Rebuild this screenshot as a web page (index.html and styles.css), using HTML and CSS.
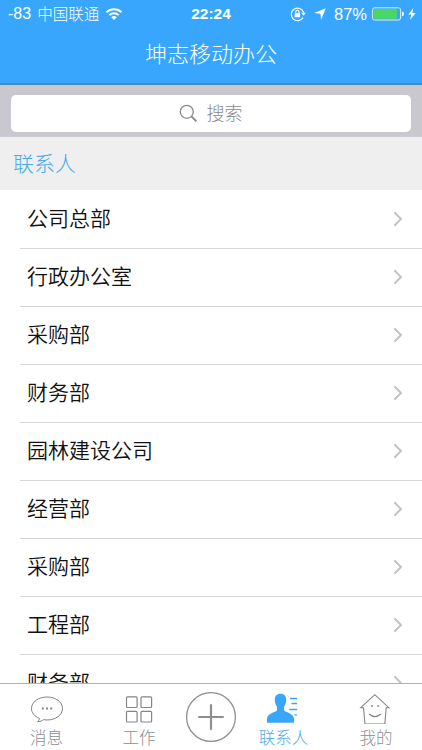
FILE: index.html
```
<!DOCTYPE html>
<html lang="zh-CN">
<head>
    <meta charset="UTF-8">
    <meta name="viewport" content="width=device-width, initial-scale=1.0">
    <title>坤志移动办公</title>
    <link rel="stylesheet" href="styles.css">
</head>
<body>
    <header class="header">
        <div class="status">
            <div class="status-left">
                <span class="signal">-83</span>
                <span class="carrier">中国联通</span>
                <svg class="wifi" width="18" height="14" viewBox="0 0 18 14">
                    <path d="M1.5 5.2a11 11 0 0 1 15 0M4.3 8.1a7 7 0 0 1 9.4 0" fill="none" stroke="#fff" stroke-width="1.9"/>
                    <path d="M9 13L6.2 10.3a4 4 0 0 1 5.6 0z" fill="#fff"/>
                </svg>
            </div>
            <div class="clock">22:24</div>
            <div class="status-right">
                <svg width="16" height="16" viewBox="0 0 16 16">
                    <path d="M13 11.6A6.3 6.3 0 1 1 13.6 6.5" fill="none" stroke="#fff" stroke-width="1.2"/>
                    <path d="M11.2 6.8h4.6l-2.3 3z" fill="#fff"/>
                    <rect x="4.7" y="7.2" width="5.4" height="4" fill="#fff"/>
                    <path d="M5.8 7.4V5.8a1.6 1.6 0 0 1 3.2 0v1.6" fill="none" stroke="#fff" stroke-width="1.1"/>
                </svg>
                <svg class="arrow" width="12" height="12" viewBox="0 0 12 12">
                    <path d="M11.8 .2L7.2 11.8 6.4 5.8.2 5z" fill="#fff"/>
                </svg>
                <span class="percent">87%</span>
                <svg class="battery" width="33" height="14" viewBox="0 0 33 14">
                    <rect x=".6" y=".8" width="28" height="12.2" rx="2" fill="none" stroke="#d5f1fb" stroke-width="1"/>
                    <rect x="1.8" y="2" width="23" height="9.8" rx=".8" fill="#4cd665"/>
                    <path d="M30 4.6q2 0 2 2.3t-2 2.3z" fill="#e6f7ff"/>
                </svg>
                <svg class="bolt" width="8" height="12" viewBox="0 0 8 12">
                    <path d="M5.4 0L.3 6.6h3L2 12l5.6-7H4.4z" fill="#fff"/>
                </svg>
            </div>
        </div>
        <h1 class="title">坤志移动办公</h1>
    </header>

    <div class="search">
        <div class="search-box">
            <svg width="19" height="19" viewBox="0 0 19 19" fill="none" stroke="#8b8b90">
                <circle cx="7.8" cy="7.8" r="6.5" stroke-width="1.3"/>
                <path d="M12.4 12.4l5 5" stroke-width="2"/>
            </svg>
            <span>搜索</span>
        </div>
    </div>

    <h2 class="section">联系人</h2>

    <ul class="list">
        <li><span>公司总部</span><svg class="chevron" viewBox="0 0 10 16"><path d="M1.3 1.3L8 8l-6.700 6.700"/></svg></li>
        <li><span>行政办公室</span><svg class="chevron" viewBox="0 0 10 16"><path d="M1.3 1.3L8 8l-6.700 6.700"/></svg></li>
        <li><span>采购部</span><svg class="chevron" viewBox="0 0 10 16"><path d="M1.3 1.3L8 8l-6.700 6.700"/></svg></li>
        <li><span>财务部</span><svg class="chevron" viewBox="0 0 10 16"><path d="M1.3 1.3L8 8l-6.700 6.700"/></svg></li>
        <li><span>园林建设公司</span><svg class="chevron" viewBox="0 0 10 16"><path d="M1.3 1.3L8 8l-6.700 6.700"/></svg></li>
        <li><span>经营部</span><svg class="chevron" viewBox="0 0 10 16"><path d="M1.3 1.3L8 8l-6.700 6.700"/></svg></li>
        <li><span>采购部</span><svg class="chevron" viewBox="0 0 10 16"><path d="M1.3 1.3L8 8l-6.700 6.700"/></svg></li>
        <li><span>工程部</span><svg class="chevron" viewBox="0 0 10 16"><path d="M1.3 1.3L8 8l-6.700 6.700"/></svg></li>
        <li><span>财务部</span><svg class="chevron" viewBox="0 0 10 16"><path d="M1.3 1.3L8 8l-6.700 6.700"/></svg></li>
    </ul>

    <nav class="tabs">
        <a class="tab">
            <svg width="34" height="32" viewBox="0 0 34 32" fill="none" stroke="#85858a">
                <path d="M9.300 26.300C4.300 24.200 1.500 20.700 1.500 16.500 1.500 10 8.300 5 17 5s15.500 5 15.500 11.500S25.700 28 17 28c-1.300 0-2.500-.1-3.600-.3-1.400 1.300-3.300 1.900-5.900 1.900 1.300-.9 1.900-2 1.800-3.300z"/>
                <path d="M11.800 16.500h2M16 16.500h2M20.200 16.500h2" stroke-width="2"/>
            </svg>
            <span>消息</span>
        </a>
        <a class="tab">
            <svg width="34" height="32" viewBox="0 0 34 32" fill="none" stroke="#85858a" stroke-width="1.2">
                <rect x="4.500" y="4.900" width="10.600" height="10.600" rx="1"/>
                <rect x="19" y="4.900" width="10.600" height="10.600" rx="1"/>
                <rect x="4.500" y="19.400" width="10.600" height="10.600" rx="1"/>
                <rect x="19" y="19.400" width="10.600" height="10.600" rx="1"/>
            </svg>
            <span>工作</span>
        </a>
        <a class="tab tab-add">
            <svg width="52" height="52" viewBox="0 0 52 52" fill="none" stroke="#8e8e8e">
                <circle cx="26" cy="26" r="24.400" stroke-width="1.300"/>
                <path d="M13.300 26h25.400M26 13.300v25.400" stroke-width="2.200"/>
            </svg>
        </a>
        <a class="tab active">
            <svg width="34" height="32" viewBox="0 0 34 32">
                <path d="M13.500 1.800c3.800 0 5.700 2.300 5.700 6 0 3-.8 5.300-2.200 6.900v3.600c1 2.200 9.700 2.600 10.200 8.900.2 2.500-.1 3.500-.7 3.500H.5c-.6 0-.8-1-.6-3.500.5-6.300 9-6.700 10.100-8.900v-3.600C8.600 13.100 7.800 10.800 7.800 7.800c0-3.700 1.900-6 5.700-6z" fill="#38a6fa"/>
                <path d="M23 6.500h7.200M24.500 11.500h5.700M22.300 17.500h7.900M27.500 22.800h2.400" stroke="#38a6fa" stroke-width="1.300"/>
            </svg>
            <span>联系人</span>
        </a>
        <a class="tab">
            <svg width="34" height="32" viewBox="0 0 34 32" fill="none" stroke="#85858a" stroke-width="1.100">
                <path d="M1.800 15.700L15.800 2.700l14 13h-2.600L25.800 32H6L4.500 15.700z"/>
                <path d="M10 22q5.800 5.200 11.800 0"/>
                <path d="M12 14h1.800M18.300 14h1.800" stroke-width="1.700"/>
            </svg>
            <span>我的</span>
        </a>
    </nav>
</body>
</html>
```
FILE: styles.css
```
* {
    box-sizing: border-box;
}
body {
    margin: 0;
    height: 750px;
    display: flex;
    flex-direction: column;
    overflow: hidden;
    background-color: #fff;
    font-family: "Noto Sans CJK SC", sans-serif;
    font-weight: 300;
}
svg {
    display: block;
    flex: none;
}
.header {
    flex: none;
    height: 85px;
    background-color: #38a6fd;
    border-bottom: 2px solid #4389c9;
    color: #fff;
}
.status {
    display: grid;
    grid-template-columns: 1fr 60px 1fr;
    align-items: center;
    height: 28px;
    font-family: "Liberation Sans", "Noto Sans CJK SC", sans-serif;
    font-size: 15.5px;
}
.status-left,
.status-right {
    display: flex;
    align-items: center;
}
.status-left {
    padding-left: 8px;
}
.signal {
    font-size: 16px;
    line-height: 20px;
    padding-bottom: 1px;
}
.carrier {
    margin-left: 6px;
    padding-top: 2px;
    line-height: 20px;
}
.wifi {
    margin-left: 6px;
}
.clock {
    padding-bottom: 1px;
    text-align: center;
    font-weight: bold;
}
.status-right {
    justify-content: flex-end;
    padding-right: 6px;
}
.arrow {
    margin-left: 8px;
}
.percent {
    margin-left: 8px;
    font-size: 16.5px;
}
.battery {
    margin-left: 5px;
}
.bolt {
    margin-left: 3px;
}
.title {
    margin: 7px 0 0;
    font-size: 22px;
    font-weight: 300;
    line-height: 34px;
    text-align: center;
}
.search {
    flex: none;
    height: 52px;
    padding: 10px 11px 5px;
    background-color: #c9c8cf;
}
.search-box {
    display: flex;
    align-items: center;
    justify-content: center;
    gap: 9px;
    height: 37px;
    padding-right: 1px;
    border-radius: 5px;
    background-color: #fff;
    color: #8b8b90;
    font-size: 18px;
}
.search-box span {
    padding-bottom: 3px;
}
.section {
    flex: none;
    margin: 0;
    height: 53px;
    padding-left: 13px;
    background-color: #efeff0;
    color: #4aa9ea;
    font-size: 21px;
    font-weight: 300;
    line-height: 51px;
}
.list {
    flex: 1;
    min-height: 0;
    margin: 0;
    padding: 1px 0 0 20px;
    overflow: hidden;
    list-style: none;
}
.list li {
    display: flex;
    align-items: center;
    justify-content: space-between;
    height: 58px;
    padding: 0 19px 2px 7px;
    border-bottom: 1px solid #d8d8d8;
    color: #111;
    font-size: 21px;
    font-weight: 350;
}
.list span {
    padding-bottom: 4px;
}
.chevron {
    width: 10px;
    height: 16px;
    fill: none;
    stroke: #c4c4c6;
    stroke-width: 2;
}
.tabs {
    flex: none;
    display: grid;
    grid-template-columns: 93px 92px 52px 93px 92px;
    height: 67px;
    border-top: 1px solid #b2b2b2;
    background-color: #fff;
    color: #8e8e93;
}
.tab {
    display: flex;
    flex-direction: column;
    align-items: center;
    padding-top: 8px;
    font-size: 16.5px;
    line-height: 27px;
}
.tab-add {
    padding-top: 7px;
}
.active {
    color: #4aa9ea;
}
```
